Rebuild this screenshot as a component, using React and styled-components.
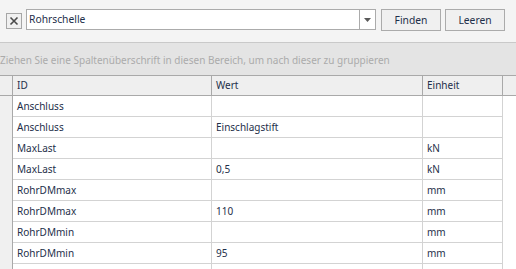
import React from "react";
import styled, { createGlobalStyle } from "styled-components";

const Global = createGlobalStyle`
  html, body { margin: 0; padding: 0; background: #ffffff; }
  body { font-family: "Noto Sans", "DejaVu Sans", sans-serif; font-size: 10px; }
`;

const Page = styled.div`
  width: 516px;
  height: 269px;
  overflow: hidden;
  display: flex;
  flex-direction: column;
  background: #ffffff;
  & > * { flex-shrink: 0; }
`;

const Toolbar = styled.div`
  height: 43px;
  box-sizing: border-box;
  background: #f4f4f4;
  border-bottom: 1px solid #c9c9c9;
  display: flex;
  align-items: flex-start;
  padding: 9px 0 0 6px;
`;

const ClearBox = styled.button`
  width: 16px;
  height: 16px;
  margin-top: 4px;
  margin-right: 4px;
  box-sizing: border-box;
  border: 1px solid #a6a6a6;
  background: #f0f0f0;
  padding: 0;
  display: flex;
  align-items: center;
  justify-content: center;
`;

const Combo = styled.div`
  width: 350px;
  height: 21px;
  box-sizing: border-box;
  border: 1px solid #ababab;
  background: #ffffff;
  display: flex;
`;

const ComboText = styled.div`
  flex: 1;
  padding-left: 2px;
  line-height: 19px;
  font-size: 10.3px;
  color: #1e2f4a;
`;

const ComboArrow = styled.div`
  width: 15px;
  border-left: 1px solid #ababab;
  display: flex;
  align-items: center;
  justify-content: center;
`;

const Button = styled.button`
  width: 60px;
  height: 22px;
  margin-left: ${(p) => p.$gap}px;
  box-sizing: border-box;
  border: 1px solid #ababab;
  background: #f0f0f0;
  font-family: inherit;
  font-size: 10.3px;
  color: #1e2f4a;
  padding: 0;
`;

const GroupPanel = styled.div`
  height: 32px;
  background: #e4e4e4;
  color: #ababab;
  font-size: 10px;
  line-height: 34px;
  white-space: nowrap;
  padding-left: 0;
`;

const Grid = styled.div`
  display: grid;
  grid-template-columns: 13px 199px 211px 80px 13px;
`;

const HeadCell = styled.div`
  height: 21px;
  box-sizing: border-box;
  background: #efefef;
  border-top: 1px solid #a9a9a9;
  border-bottom: 1px solid #a9a9a9;
  border-right: ${(p) => (p.$last ? "none" : "1px solid #a9a9a9")};
  padding-left: 4px;
  line-height: 19px;
  color: #1e2f4a;
  white-space: nowrap;
`;

const Indicator = styled.div`
  height: 21px;
  background: #f0f0f0;
  border-right: 1px solid #a9a9a9;
  box-sizing: border-box;
`;

const Cell = styled.div`
  height: 21px;
  box-sizing: border-box;
  border-bottom: 1px solid #d3d3d3;
  border-right: 1px solid #d3d3d3;
  padding-left: 4px;
  line-height: 20px;
  color: #1e2f4a;
  white-space: nowrap;
`;

const Filler = styled.div`
  height: 21px;
  background: #ffffff;
`;

const rows = [
  ["Anschluss", "", ""],
  ["Anschluss", "Einschlagstift", ""],
  ["MaxLast", "", "kN"],
  ["MaxLast", "0,5", "kN"],
  ["RohrDMmax", "", "mm"],
  ["RohrDMmax", "110", "mm"],
  ["RohrDMmin", "", "mm"],
  ["RohrDMmin", "95", "mm"],
  ["", "", ""],
];

export default function App() {
  return (
    <Page>
      <Global />
      <Toolbar>
        <ClearBox aria-label="clear">
          <svg width="10" height="10" viewBox="0 0 10 10">
            <path d="M1.5 1.5 L8.5 8.5 M8.5 1.5 L1.5 8.5" stroke="#4a4a4a" strokeWidth="1.6" />
          </svg>
        </ClearBox>
        <Combo>
          <ComboText>Rohrschelle</ComboText>
          <ComboArrow>
            <svg width="7" height="4" viewBox="0 0 7 4">
              <path d="M0 0 H7 L3.5 4 Z" fill="#595959" />
            </svg>
          </ComboArrow>
        </Combo>
        <Button $gap={5}>Finden</Button>
        <Button $gap={4}>Leeren</Button>
      </Toolbar>
      <GroupPanel>Ziehen Sie eine Spaltenüberschrift in diesen Bereich, um nach dieser zu gruppieren</GroupPanel>
      <Grid>
        <HeadCell />
        <HeadCell>ID</HeadCell>
        <HeadCell>Wert</HeadCell>
        <HeadCell>Einheit</HeadCell>
        <HeadCell $last />
        {rows.map((r, i) => (
          <React.Fragment key={i}>
            <Indicator />
            <Cell>{r[0]}</Cell>
            <Cell>{r[1]}</Cell>
            <Cell>{r[2]}</Cell>
            <Filler />
          </React.Fragment>
        ))}
      </Grid>
    </Page>
  );
}
